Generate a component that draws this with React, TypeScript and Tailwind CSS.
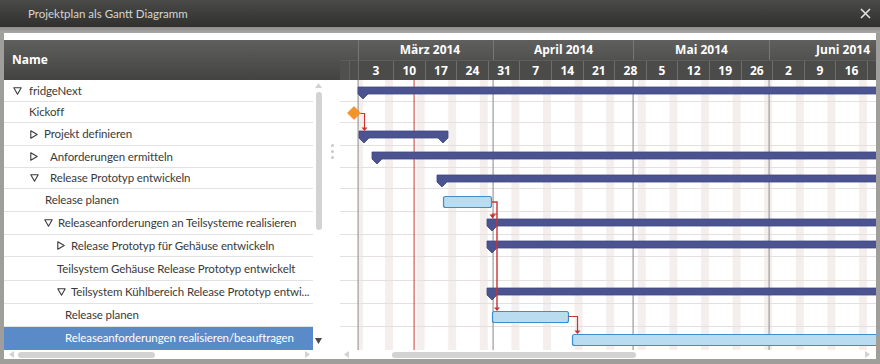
import React from "react";

type Row = {
  icon: "down" | "right" | null;
  pad: string;
  iconW: string;
  text: string;
  h: string;
  selected?: boolean;
};

const rows: Row[] = [
  { icon: "down", pad: "pl-[9px]", iconW: "w-[16px]", text: "fridgeNext", h: "h-[22px]" },
  { icon: null, pad: "pl-[25px]", iconW: "", text: "Kickoff", h: "h-[21px]" },
  { icon: "right", pad: "pl-[26px]", iconW: "w-[14px]", text: "Projekt definieren", h: "h-[23px]" },
  { icon: "right", pad: "pl-[26px]", iconW: "w-[20px]", text: "Anforderungen ermitteln", h: "h-[22px]" },
  { icon: "down", pad: "pl-[26px]", iconW: "w-[20px]", text: "Release Prototyp entwickeln", h: "h-[21px]" },
  { icon: null, pad: "pl-[41px]", iconW: "", text: "Release planen", h: "h-[23px]" },
  { icon: "down", pad: "pl-[40px]", iconW: "w-[14px]", text: "Releaseanforderungen an Teilsysteme realisieren", h: "h-[23px]" },
  { icon: "right", pad: "pl-[53px]", iconW: "w-[14px]", text: "Release Prototyp für Gehäuse entwickeln", h: "h-[22px]" },
  { icon: null, pad: "pl-[53px]", iconW: "", text: "Teilsystem Gehäuse Release Prototyp entwickelt", h: "h-[24px]" },
  { icon: "down", pad: "pl-[53px]", iconW: "w-[14px]", text: "Teilsystem Kühlbereich Release Prototyp entwi...", h: "h-[23px]" },
  { icon: null, pad: "pl-[61px]", iconW: "", text: "Release planen", h: "h-[23px]" },
  { icon: null, pad: "pl-[61px]", iconW: "", text: "Releaseanforderungen realisieren/beauftragen", h: "h-[23px]", selected: true },
];

const rowH = [22, 21, 23, 22, 21, 23, 23, 22, 24, 23, 23, 23];
const rowTop: number[] = [];
{
  let acc = 0;
  for (const h of rowH) {
    rowTop.push(acc);
    acc += h;
  }
}

const weeks = ["3", "10", "17", "24", "31", "7", "14", "21", "28", "5", "12", "19", "26", "2", "9", "16"];

function TriDown() {
  return (
    <svg width="9" height="8" viewBox="0 0 9 8" className="shrink-0">
      <path d="M0.8 0.8 H8.2 L4.5 7.2 Z" fill="none" stroke="#3a3a3a" strokeWidth="1.1" strokeLinejoin="round" />
    </svg>
  );
}

function TriRight() {
  return (
    <svg width="8" height="9" viewBox="0 0 8 9" className="shrink-0">
      <path d="M0.8 0.8 V8.2 L7.2 4.5 Z" fill="none" stroke="#3a3a3a" strokeWidth="1.1" strokeLinejoin="round" />
    </svg>
  );
}

function Summary({ x0, x1, top, rightPoint }: { x0: number; x1: number; top: number; rightPoint?: boolean }) {
  const t = top;
  const b = top + 7;
  const pts = rightPoint
    ? `${x0},${t} ${x1},${t} ${x1},${b} ${x1 - 5},${b + 5} ${x1 - 10},${b} ${x0 + 10},${b} ${x0 + 5},${b + 5} ${x0},${b}`
    : `${x0},${t} ${x1},${t} ${x1},${b} ${x0 + 10},${b} ${x0 + 5},${b + 5} ${x0},${b}`;
  return <polygon points={pts} fill="#4b5391" stroke="#3f4682" strokeWidth="0.8" strokeLinejoin="round" />;
}

function Task({ x0, x1, top }: { x0: number; x1: number; top: number }) {
  return <rect x={x0 + 0.5} y={top + 0.5} width={x1 - x0} height={11} rx={2} fill="#b9dcf0" stroke="#3b8fce" strokeWidth="1.2" />;
}

function Chart() {
  const W = 536;
  const H = 270;
  const dividers: number[] = [];
  for (let i = 0; i <= 15; i++) dividers.push(393 + i * 31.6 - 340);
  const red = "#cf3030";
  return (
    <svg width={W} height={H} viewBox={`0 0 ${W} ${H}`} className="block">
      <rect x={0} y={0} width={W} height={H} fill="#ffffff" />
      <rect x={18} y={0} width={5} height={H} fill="#f4efed" />
      {dividers.map((d, i) => (
        <rect key={i} x={d - 8} y={0} width={8} height={H} fill="#f4efed" />
      ))}
      {rowTop.slice(1).map((y, i) => (
        <rect key={i} x={0} y={y - 1} width={W} height={1} fill="#e6dfdf" />
      ))}
      {[18, 153, 293, 429].map((x, i) => (
        <rect key={i} x={x - 0.5} y={0} width={1.2} height={H} fill="#9c9c9c" />
      ))}
      <rect x={73.5} y={0} width={1.2} height={H} fill="#d45a5a" />

      <Summary x0={18} x1={600} top={7} />
      <Summary x0={19} x1={108} top={51} rightPoint />
      <Summary x0={32} x1={600} top={72} />
      <Summary x0={97} x1={600} top={95} />
      <Task x0={103} x1={151} top={116} />
      <Summary x0={147} x1={600} top={139} />
      <Summary x0={147} x1={600} top={161} />
      <Summary x0={147} x1={600} top={208} />
      <Task x0={152} x1={228} top={231} />
      <Task x0={232} x1={600} top={254} />

      <polygon points="14,26.5 20.5,33 14,39.5 7.5,33" fill="#f5922a" stroke="#e8831a" strokeWidth="0.6" />

      <path d="M20.5 33.5 H24.5 V48" fill="none" stroke={red} strokeWidth="1.2" />
      <polygon points="21.5,47.5 27.5,47.5 24.5,51" fill={red} />

      <path d="M152 122 H157 V228" fill="none" stroke={red} strokeWidth="1.4" />
      <path d="M157 134 H152.5 V135" fill="none" stroke={red} strokeWidth="1.2" />
      <polygon points="149.5,134.5 155.5,134.5 152.5,138.5" fill={red} />
      <polygon points="154,227.5 160,227.5 157,231" fill={red} />

      <path d="M228.5 236.5 H237.5 V251" fill="none" stroke={red} strokeWidth="1.2" />
      <polygon points="234.5,250.5 240.5,250.5 237.5,254" fill={red} />
    </svg>
  );
}

export default function App() {
  return (
    <div
      className="w-[880px] h-[364px] overflow-hidden bg-[#9f9e9a] flex flex-col"
      style={{ fontFamily: 'Lato, "Open Sans", sans-serif' }}
    >
      {/* Title bar */}
      <div className="h-[27px] shrink-0 flex items-center bg-gradient-to-b from-[#4a4a48] to-[#30302e] pl-[28px] pr-[8px]">
        <span className="text-[11.5px] text-[#d6d6d4] leading-none">Projektplan als Gantt Diagramm</span>
        <svg width="11" height="11" viewBox="0 0 11 11" className="ml-auto mr-[1px]">
          <path d="M1 1 L10 10 M10 1 L1 10" stroke="#e2e2e2" strokeWidth="1.6" />
        </svg>
      </div>
      <div className="h-[6px] shrink-0 bg-gradient-to-b from-[#8e8d89] to-[#a9a8a4]" />

      <div className="flex-1 mx-[4px] flex flex-col bg-white">
        <div className="h-[7px] shrink-0 bg-white" />
        {/* Header */}
        <div
          className="h-[40px] shrink-0 flex bg-gradient-to-b from-[#5f5f5d] to-[#434341] text-white font-bold text-[12px]"
          style={{ fontFamily: '"Open Sans", sans-serif' }}
        >
          <div className="w-[336px] flex items-center pl-[8px]">Name</div>
          <div className="w-[536px] flex flex-col">
            <div className="h-[20px] flex">
              <div className="w-[18px]" />
              <div className="w-[135px] border-l border-[#777775] flex items-center justify-center pl-[8px]">März 2014</div>
              <div className="w-[140px] border-l border-[#777775] flex items-center justify-center">April 2014</div>
              <div className="w-[136px] border-l border-[#777775] flex items-center justify-center">Mai 2014</div>
              <div className="flex-1 border-l border-[#777775] flex items-center justify-end pr-[6px]">Juni 2014</div>
            </div>
            <div className="h-[20px] flex bg-[#4b4b49] border-t border-[#5e5e5c]">
              <div className="w-[10px] border-r border-[#626260] bg-[#505050]" />
              <div className="w-[8px] bg-[#4e4e4c]" />
              <div className="w-[35px] border-l border-[#6e6e6c] flex items-center justify-center">3</div>
              {weeks.slice(1).map((w, i) => (
                <div key={i} className="w-[31.6px] shrink-0 border-l border-[#6e6e6c] flex items-center justify-center">
                  {w}
                </div>
              ))}
              <div className="flex-1 border-l border-[#6e6e6c]" />
            </div>
          </div>
        </div>

        {/* Body */}
        <div className="h-[270px] shrink-0 flex">
          <div className="w-[309px] flex flex-col text-[11.5px] tracking-[-0.1px] text-[#3a3a3a]">
            {rows.map((r, i) => (
              <div
                key={i}
                className={`${r.h} ${r.pad} flex items-center whitespace-nowrap overflow-hidden border-b ${
                  r.selected ? "bg-[#5b8ac8] text-white border-[#5b8ac8]" : "border-[#e2e2e2]"
                }`}
              >
                {r.icon && (
                  <span className={`${r.iconW} shrink-0 flex items-center`}>
                    {r.icon === "down" ? <TriDown /> : <TriRight />}
                  </span>
                )}
                <span className="leading-none">{r.text}</span>
              </div>
            ))}
          </div>
          <div className="w-[11px] flex flex-col items-center">
            <svg width="7" height="5" viewBox="0 0 7 5" className="mt-[3px]">
              <path d="M0 5 L3.5 0 L7 5 Z" fill="#d2d2d2" />
            </svg>
            <div className="mt-[4px] w-[6px] h-[138px] rounded-[3px] bg-[#d3d3d3]" />
            <svg width="7" height="6" viewBox="0 0 7 6" className="mt-auto mb-[6px]">
              <path d="M0 0 L7 0 L3.5 6 Z" fill="#4a4a4a" />
            </svg>
          </div>
          <div className="w-[16px] flex flex-col items-start pl-[7px] pt-[64px] gap-[3px]">
            <div className="w-[3px] h-[3px] rounded-full bg-[#c9c9c9]" />
            <div className="w-[3px] h-[3px] rounded-full bg-[#c9c9c9]" />
            <div className="w-[3px] h-[3px] rounded-full bg-[#c9c9c9]" />
          </div>
          <div className="w-[536px]">
            <Chart />
          </div>
        </div>

        {/* horizontal scrollbars */}
        <div className="h-[9px] shrink-0 flex items-center">
          <div className="w-[320px] flex items-center">
            <svg width="5" height="7" viewBox="0 0 5 7" className="ml-[5px]">
              <path d="M5 0 L0 3.5 L5 7 Z" fill="#d2d2d2" />
            </svg>
            <div className="ml-[4px] w-[137px] h-[6px] rounded-[3px] bg-[#d3d3d3]" />
            <svg width="5" height="7" viewBox="0 0 5 7" className="ml-auto mr-[14px]">
              <path d="M0 0 L5 3.5 L0 7 Z" fill="#d2d2d2" />
            </svg>
          </div>
          <div className="w-[16px]" />
          <div className="w-[536px] flex items-center">
            <svg width="5" height="7" viewBox="0 0 5 7" className="ml-[4px]">
              <path d="M5 0 L0 3.5 L5 7 Z" fill="#d2d2d2" />
            </svg>
            <div className="ml-[43px] w-[244px] h-[6px] rounded-[3px] bg-[#d3d3d3]" />
            <svg width="5" height="7" viewBox="0 0 5 7" className="ml-auto mr-[6px]">
              <path d="M0 0 L5 3.5 L0 7 Z" fill="#d2d2d2" />
            </svg>
          </div>
        </div>
      </div>
      <div className="h-[5px] shrink-0" />
    </div>
  );
}
